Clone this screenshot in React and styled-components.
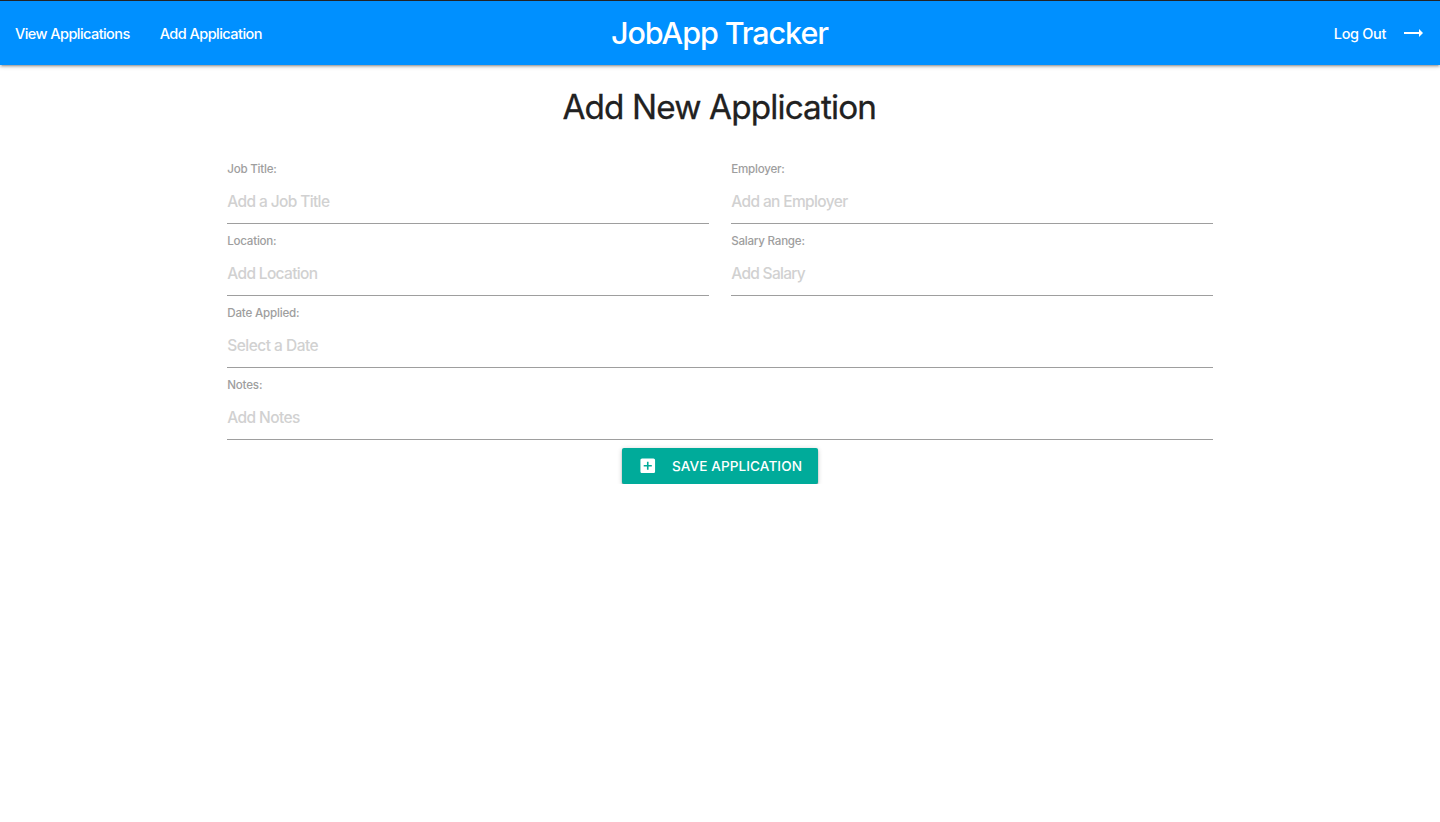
import React from "react";
import styled, { createGlobalStyle } from "styled-components";

const GlobalStyle = createGlobalStyle`
  *, *::before, *::after { box-sizing: border-box; }
  html { font-size: 15px; }
  body {
    margin: 0;
    background: #fff;
    color: #212121;
    font-family: Inter, "Liberation Sans", sans-serif;
    font-weight: 500;
    line-height: 1.5;
  }
`;

const NavBar = styled.nav`
  display: grid;
  grid-template-columns: 1fr auto 1fr;
  align-items: center;
  height: 65px;
  border-top: 1px solid #222326;
  background: #0090ff;
  color: #fff;
  box-shadow: 0 2px 2px 0 rgba(0, 0, 0, 0.14), 0 3px 1px -2px rgba(0, 0, 0, 0.12),
    0 1px 5px 0 rgba(0, 0, 0, 0.2);
`;

const NavLinks = styled.div`
  display: flex;
  justify-content: ${({ $end }) => ($end ? "flex-end" : "flex-start")};
`;

const NavLink = styled.a`
  display: flex;
  align-items: center;
  height: 64px;
  padding: 2px 15px 0;
  font-size: 14.5px;
  letter-spacing: ${({ $tracking }) => $tracking}px;
  color: inherit;
  text-decoration: none;
  white-space: nowrap;

  svg { margin: -2px 0 0 15px; }
`;

const Brand = styled.a`
  padding-right: 1px;
  font-size: 30.5px;
  line-height: 64px;
  letter-spacing: -1.09px;
  white-space: nowrap;
`;

const Main = styled.main`
  width: 70%;
  margin: 0 auto;
`;

const Heading = styled.h4`
  margin: 23px 0 34px;
  padding-right: 1.5px;
  font-size: 33.3px;
  font-weight: 400;
  line-height: 38px;
  text-align: center;
  letter-spacing: -0.87px;
  -webkit-text-stroke: 0.3px currentColor;
`;

const Form = styled.form`
  display: grid;
  grid-template-columns: 1fr 1fr;
  gap: 8px 22.5px;
  padding: 0 11.25px;
`;

const Field = styled.div`
  grid-column: span ${({ $wide }) => ($wide ? 2 : 1)};
  display: flex;
  flex-direction: column;
`;

const Label = styled.label`
  height: 18px;
  font-size: 11.6px;
  line-height: 18px;
  letter-spacing: ${({ $tracking }) => $tracking}px;
  color: #9e9e9e;
`;

const Input = styled.input`
  width: 100%;
  height: 46px;
  padding: 1px 0 0;
  border: 0;
  border-bottom: 1px solid #9e9e9e;
  border-radius: 0;
  outline: none;
  background: transparent;
  font-family: inherit;
  font-size: 15.5px;
  font-weight: inherit;
  letter-spacing: ${({ $tracking }) => $tracking}px;

  &::placeholder { color: #d1d1d1; opacity: 1; }
`;

const Actions = styled.div`
  grid-column: span 2;
  display: flex;
  justify-content: center;
`;

const SaveButton = styled.button`
  display: flex;
  align-items: center;
  gap: 14.5px;
  width: 196px;
  height: 36px;
  padding: 0 16px;
  border: 0;
  border-radius: 2px;
  background: #00ab9a;
  color: #fff;
  font-family: inherit;
  font-size: 13.6px;
  font-weight: inherit;
  letter-spacing: 0.08px;
  text-transform: uppercase;
  white-space: nowrap;
  box-shadow: 0 2px 2px 0 rgba(0, 0, 0, 0.14), 0 1px 1px 0 rgba(0, 0, 0, 0.22),
    0 1px 5px 0 rgba(0, 0, 0, 0.2);

  svg { flex: none; }
`;

const ArrowIcon = () => (
  <svg width="24" height="24" viewBox="0 0 24 24" fill="currentColor">
    <path d="M22 12l-4-4v3H3v2h15v3z" />
  </svg>
);

const AddBoxIcon = () => (
  <svg width="19.5" height="19.5" viewBox="0 0 24 24" fill="currentColor">
    <path d="M19 3H5c-1.11 0-2 .9-2 2v14c0 1.1.89 2 2 2h14c1.1 0 2-.9 2-2V5c0-1.1-.9-2-2-2zm-2 10h-4v4h-2v-4H7v-2h4V7h2v4h4v2z" />
  </svg>
);

const fields = [
  { id: "title", label: "Job Title:", hint: "Add a Job Title", labelTracking: -0.23, tracking: -0.62 },
  { id: "employer", label: "Employer:", hint: "Add an Employer", labelTracking: -0.23, tracking: -0.63 },
  { id: "location", label: "Location:", hint: "Add Location", labelTracking: -0.25, tracking: -0.66 },
  { id: "salary", label: "Salary Range:", hint: "Add Salary", labelTracking: -0.24, tracking: -0.7 },
  { id: "date", label: "Date Applied:", hint: "Select a Date", labelTracking: -0.19, tracking: -0.52, wide: true },
  { id: "notes", label: "Notes:", hint: "Add Notes", labelTracking: -0.2, tracking: -0.58, wide: true },
];

export default function App() {
  return (
    <>
      <GlobalStyle />
      <NavBar>
        <NavLinks>
          <NavLink $tracking={-0.56}>View Applications</NavLink>
          <NavLink $tracking={-0.54}>Add Application</NavLink>
        </NavLinks>
        <Brand>JobApp Tracker</Brand>
        <NavLinks $end>
          <NavLink $tracking={-0.35}>
            Log Out
            <ArrowIcon />
          </NavLink>
        </NavLinks>
      </NavBar>
      <Main>
        <Heading>Add New Application</Heading>
        <Form>
          {fields.map((f) => (
            <Field key={f.id} $wide={f.wide}>
              <Label htmlFor={f.id} $tracking={f.labelTracking}>{f.label}</Label>
              <Input id={f.id} type="text" placeholder={f.hint} $tracking={f.tracking} />
            </Field>
          ))}
          <Actions>
            <SaveButton type="button">
              <AddBoxIcon />
              Save Application
            </SaveButton>
          </Actions>
        </Form>
      </Main>
    </>
  );
}
